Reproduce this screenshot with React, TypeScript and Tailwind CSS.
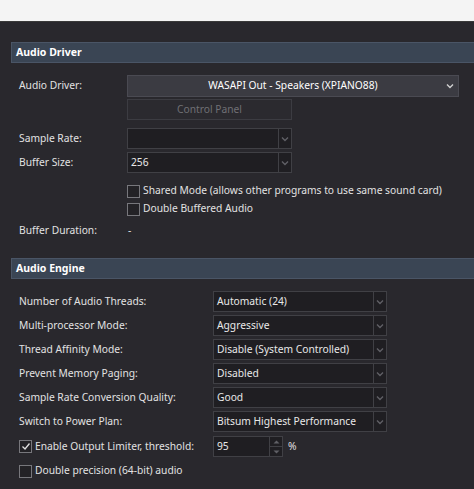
import React from "react"

const font = { fontFamily: '"Noto Sans", "Open Sans", sans-serif' }

function Chevron({ className = "" }: { className?: string }) {
  return (
    <svg width="8" height="6" viewBox="0 0 8 6" className={className}>
      <path d="M1 1.5 L4 4.5 L7 1.5" fill="none" stroke="currentColor" strokeWidth="1.4" />
    </svg>
  )
}

function SectionHeader({ title }: { title: string }) {
  return (
    <div className="ml-[11px] h-[21px] flex items-center pl-[4px] bg-[#3a4554] border border-[#4a5566] border-r-0">
      <span className="text-[10.5px] font-bold text-white">{title}</span>
    </div>
  )
}

function Select({ value, width }: { value: string; width: string }) {
  return (
    <div className={`flex h-[21px] ${width} bg-[#1f1e22] border border-[#404045]`}>
      <div className="flex-1 flex items-center pl-[3px] text-[#e8e8e8] whitespace-nowrap overflow-hidden">{value}</div>
      <div className="w-[13px] border-l border-[#404045] flex items-center justify-center text-[#606066]">
        <Chevron />
      </div>
    </div>
  )
}

function Checkbox({ checked = false }: { checked?: boolean }) {
  return (
    <div className="w-[13px] h-[13px] shrink-0 border border-[#77777c] bg-[#232226] flex items-center justify-center text-[#e0e0e0]">
      {checked && (
        <svg width="10" height="9" viewBox="0 0 10 9">
          <path d="M1.5 4.5 L4 7 L8.5 1.5" fill="none" stroke="currentColor" strokeWidth="1.3" />
        </svg>
      )}
    </div>
  )
}

const engineRows = [
  ["Number of Audio Threads:", "Automatic (24)"],
  ["Multi-processor Mode:", "Aggressive"],
  ["Thread Affinity Mode:", "Disable (System Controlled)"],
  ["Prevent Memory Paging:", "Disabled"],
  ["Sample Rate Conversion Quality:", "Good"],
  ["Switch to Power Plan:", "Bitsum Highest Performance"],
]

export default function App() {
  return (
    <div className="w-[474px] h-[489px] overflow-hidden bg-[#29282d] text-[#e2e2e2] whitespace-nowrap" style={font}>
      <div className="h-[22px] bg-[#f4f4f4] border-b border-[#3a3a3a]" />
      <div className="pt-[20px]">
        <SectionHeader title="Audio Driver" />

        <div className="pl-[19px] pt-[12px] text-[10.25px]">
          <div className="flex items-center h-[22px]">
            <div className="w-[108px]">Audio Driver:</div>
            <div className="w-[332px] h-[22px] bg-[#3b3b42] border border-[#4a4a52] flex items-center relative">
              <div className="flex-1 text-center text-white">WASAPI Out - Speakers (XPIANO88)</div>
              <Chevron className="absolute right-[4px] text-[#d0d0d0]" />
            </div>
          </div>
          <div className="flex mt-[2px]">
            <div className="w-[108px]" />
            <div className="w-[165px] h-[21px] border border-[#3c3c42] bg-[#2b2a2f] flex items-center justify-center text-[#707075]">
              Control Panel
            </div>
          </div>

          <div className="flex items-center mt-[8px]">
            <div className="w-[108px]">Sample Rate:</div>
            <Select value="" width="w-[165px]" />
          </div>
          <div className="flex items-center mt-[3px]">
            <div className="w-[108px]">Buffer Size:</div>
            <Select value="256" width="w-[165px]" />
          </div>

          <div className="flex items-center mt-[10px] h-[16px]">
            <div className="w-[108px]" />
            <Checkbox />
            <span className="ml-[3px]">Shared Mode (allows other programs to use same sound card)</span>
          </div>
          <div className="flex items-center mt-[2px] h-[16px]">
            <div className="w-[108px]" />
            <Checkbox />
            <span className="ml-[3px]">Double Buffered Audio</span>
          </div>

          <div className="flex items-center mt-[6px] h-[16px]">
            <div className="w-[109px]">Buffer Duration:</div>
            <span>-</span>
          </div>
        </div>

        <div className="mt-[19px]">
          <SectionHeader title="Audio Engine" />
        </div>

        <div className="pl-[19px] pt-[12px] text-[10.25px]">
          <div className="flex flex-col gap-[3px]">
            {engineRows.map(([label, value]) => (
              <div key={label} className="flex items-center">
                <div className="w-[194px]">{label}</div>
                <Select value={value} width="w-[174px]" />
              </div>
            ))}
          </div>

          <div className="flex items-center mt-[4px]">
            <div className="w-[194px] flex items-center">
              <Checkbox checked />
              <span className="ml-[3px]">Enable Output Limiter, threshold:</span>
            </div>
            <div className="flex h-[21px] w-[70px] bg-[#1f1e22] border border-[#404045]">
              <div className="flex-1 flex items-center pl-[3px] text-[#e8e8e8]">95</div>
              <div className="w-[13px] border-l border-[#404045] flex flex-col text-[#606066]">
                <div className="flex-1 flex items-center justify-center border-b border-[#404045]">
                  <svg width="7" height="4" viewBox="0 0 7 4"><path d="M0.5 3.5 L3.5 0.5 L6.5 3.5 Z" fill="currentColor" /></svg>
                </div>
                <div className="flex-1 flex items-center justify-center">
                  <svg width="7" height="4" viewBox="0 0 7 4"><path d="M0.5 0.5 L3.5 3.5 L6.5 0.5 Z" fill="currentColor" /></svg>
                </div>
              </div>
            </div>
            <span className="ml-[5px]">%</span>
          </div>

          <div className="flex items-center mt-[6px] h-[16px]">
            <Checkbox />
            <span className="ml-[3px]">Double precision (64-bit) audio</span>
          </div>
        </div>
      </div>
    </div>
  )
}
